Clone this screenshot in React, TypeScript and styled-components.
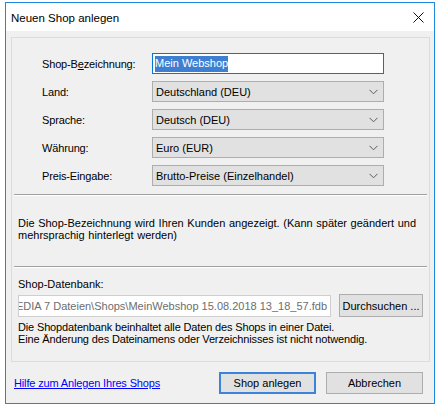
import styled, { createGlobalStyle } from "styled-components";

const Global = createGlobalStyle`
  html, body {
    margin: 0;
    padding: 0;
    background: #ffffff;
  }
  body {
    font-family: "Liberation Sans", Arial, sans-serif;
    font-size: 11px;
    color: #000000;
  }
`;

const Window = styled.div`
  margin: 2px 0 0 5px;
  width: 430px;
  height: 402px;
  box-sizing: border-box;
  border: 1px solid #1f86da;
  background: #f0f0f0;
  display: flex;
  flex-direction: column;
`;

const TitleBar = styled.div`
  height: 28px;
  background: #ffffff;
  display: flex;
  align-items: center;
  justify-content: space-between;
  padding: 0 10px 0 5px;
`;

const Title = styled.div`
  font-size: 11.5px;
  color: #000000;
  padding-top: 1px;
`;

const CloseIcon = styled.svg`
  width: 11px;
  height: 11px;
`;

const Body = styled.div`
  flex: 1;
  display: flex;
  flex-direction: column;
  padding: 6px 4px 0 5px;
`;

const Panel = styled.div`
  height: 325px;
  box-sizing: border-box;
  border: 1px solid #dcdcdc;
  display: flex;
  flex-direction: column;
  padding: 0 2px;
`;

const Form = styled.div`
  display: flex;
  flex-direction: column;
  gap: 7px;
  padding: 15px 0 0 28px;
`;

const Row = styled.div`
  display: flex;
  align-items: center;
  height: 21px;
`;

const Label = styled.div`
  width: 110px;
  letter-spacing: -0.15px;
`;

const TextInput = styled.div`
  width: 232px;
  height: 21px;
  box-sizing: border-box;
  border: 1px solid #0078d7;
  background: #ffffff;
  display: flex;
  align-items: center;
  padding-left: 2px;
`;

const Selected = styled.span`
  background: #3f7fd2;
  color: #ffffff;
  padding: 1px 0 2px;
  line-height: 13px;
`;

const Combo = styled.div`
  width: 232px;
  height: 21px;
  box-sizing: border-box;
  border: 1px solid #adadad;
  background: #e1e1e1;
  display: flex;
  align-items: center;
  justify-content: space-between;
  padding: 0 5px 0 3px;
`;

const Chevron = styled.svg`
  width: 9px;
  height: 6px;
`;

const Separator = styled.div<{ $top: number }>`
  margin-top: ${(p) => p.$top}px;
  border-top: 1px solid #a0a0a0;
  border-bottom: 1px solid #ffffff;
`;

const Note = styled.div`
  padding: 21px 0 0 4px;
  line-height: 12px;
  word-spacing: 0.6px;
`;

const DbSection = styled.div`
  display: flex;
  flex-direction: column;
  padding: 10px 4px 0 4px;
`;

const DbLabel = styled.div`
  line-height: 12px;
`;

const DbRow = styled.div`
  display: flex;
  align-items: center;
  gap: 8px;
  margin-top: 4px;
`;

const PathBox = styled.div`
  width: 313px;
  height: 22px;
  box-sizing: border-box;
  border: 1px solid #cfcfcf;
  background: #ffffff;
  color: #6d6d6d;
  display: flex;
  align-items: center;
  justify-content: flex-end;
  overflow: hidden;
  white-space: nowrap;
  padding-right: 3px;
`;

const Button = styled.button<{ $default?: boolean }>`
  font-family: "Liberation Sans", Arial, sans-serif;
  font-size: 11px;
  color: #000000;
  background: #e1e1e1;
  box-sizing: border-box;
  border: ${(p) => (p.$default ? "2px solid #3c83dc" : "1px solid #adadad")};
  padding: 0;
  height: 22px;
  width: 97px;
`;

const BrowseButton = styled(Button)`
  width: 84px;
  height: 23px;
`;

const Info = styled.div`
  margin-top: 4px;
  line-height: 12px;
  letter-spacing: -0.15px;
`;

const Footer = styled.div`
  display: flex;
  align-items: center;
  padding: 10px 7px 0 3px;
  gap: 10px;
`;

const HelpLink = styled.a`
  color: #0000ff;
  text-decoration: underline;
  flex: 1;
  cursor: pointer;
  letter-spacing: -0.15px;
`;

function App() {
  return (
    <>
      <Global />
      <Window>
        <TitleBar>
          <Title>Neuen Shop anlegen</Title>
          <CloseIcon viewBox="0 0 11 11">
            <path d="M0.5 0.5 L10.5 10.5 M10.5 0.5 L0.5 10.5" stroke="#111" strokeWidth="1" fill="none" />
          </CloseIcon>
        </TitleBar>
        <Body>
          <Panel>
            <Form>
              <Row>
                <Label>
                  Shop-B<u>e</u>zeichnung:
                </Label>
                <TextInput>
                  <Selected>Mein Webshop</Selected>
                </TextInput>
              </Row>
              {[
                ["Land:", "Deutschland (DEU)"],
                ["Sprache:", "Deutsch (DEU)"],
                ["Währung:", "Euro (EUR)"],
                ["Preis-Eingabe:", "Brutto-Preise (Einzelhandel)"],
              ].map(([label, value]) => (
                <Row key={label}>
                  <Label>{label}</Label>
                  <Combo>
                    <span>{value}</span>
                    <Chevron viewBox="0 0 9 6">
                      <path d="M0.5 0.8 L4.5 4.8 L8.5 0.8" stroke="#5a5a5a" strokeWidth="1" fill="none" />
                    </Chevron>
                  </Combo>
                </Row>
              ))}
            </Form>
            <Separator $top={8} />
            <Note>
              Die Shop-Bezeichnung wird Ihren Kunden angezeigt. (Kann später geändert und
              <br />
              mehrsprachig hinterlegt werden)
            </Note>
            <Separator $top={25} />
            <DbSection>
              <DbLabel>Shop-Datenbank:</DbLabel>
              <DbRow>
                <PathBox>
                  C:\Users\Public\Documents\SHOPMEDIA 7 Dateien\Shops\MeinWebshop 15.08.2018 13_18_57.fdb
                </PathBox>
                <BrowseButton>Durchsuchen ...</BrowseButton>
              </DbRow>
              <Info>
                Die Shopdatenbank beinhaltet alle Daten des Shops in einer Datei.
                <br />
                Eine Änderung des Dateinamens oder Verzeichnisses ist nicht notwendig.
              </Info>
            </DbSection>
          </Panel>
          <Footer>
            <HelpLink>Hilfe zum Anlegen Ihres Shops</HelpLink>
            <Button $default>Shop anlegen</Button>
            <Button>Abbrechen</Button>
          </Footer>
        </Body>
      </Window>
    </>
  );
}

export default App;
